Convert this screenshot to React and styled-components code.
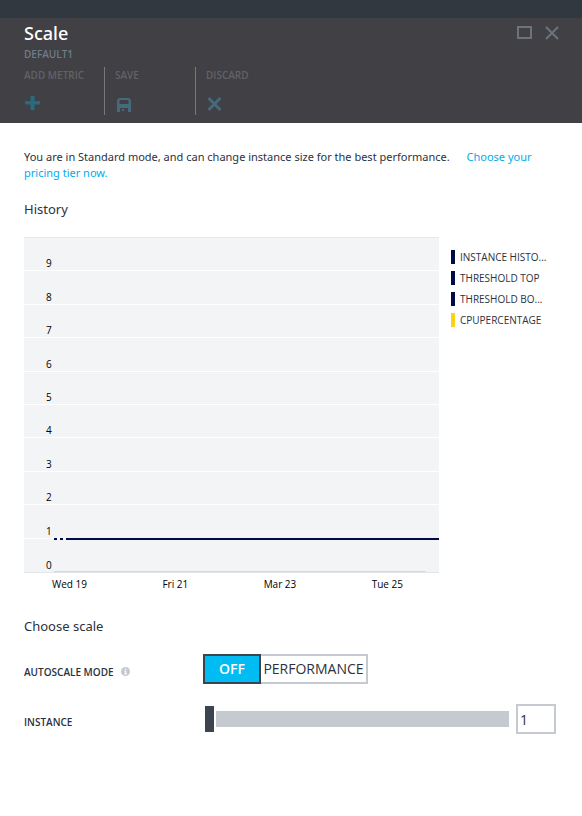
import React, { useState } from "react";
import styled, { createGlobalStyle } from "styled-components";

const GlobalStyle = createGlobalStyle`
  * { box-sizing: border-box; }
  body {
    margin: 0;
    background: #fff;
    color: #2b323d;
    font-family: "Open Sans", "Noto Sans", sans-serif;
    font-size: 12px;
  }
  button, input { font-family: inherit; color: inherit; }
`;

const Blade = styled.main`
  min-height: 100vh;
`;

const TopStrip = styled.div`
  height: 18px;
  background: #31383f;
`;

const Header = styled.header`
  height: 105px;
  padding: 2px 23px 0 24px;
  background: #404045;
`;

const TitleRow = styled.div`
  display: flex;
  justify-content: space-between;
  align-items: center;
`;

const Title = styled.h1`
  margin: 0;
  font-family: "Noto Sans", sans-serif;
  font-size: 18px;
  line-height: 26px;
  font-weight: 500;
  color: #fff;
`;

const WindowButtons = styled.div`
  display: flex;
  gap: 13px;
`;

const IconButton = styled.button`
  display: block;
  padding: 0;
  border: 0;
  background: none;
  line-height: 0;
  color: #6b747e;
`;

const Subtitle = styled.div`
  font-size: 10px;
  line-height: 16px;
  font-weight: 600;
  color: #6f7c89;
`;

const Commands = styled.div`
  display: flex;
  margin-top: 5px;
`;

const Command = styled.button`
  display: flex;
  flex-direction: column;
  align-items: flex-start;
  gap: 11px;
  width: ${(p) => p.$width}px;
  height: 48px;
  padding: 0 0 0 ${(p) => (p.$divided ? 10 : 0)}px;
  border: 0;
  border-left: ${(p) => (p.$divided ? "1px solid #77777c" : "0")};
  background: none;
  font-size: 10px;
  line-height: 17px;
  text-align: left;
  white-space: nowrap;
  font-weight: 600;

  span { color: #626267; }
  svg { color: ${(p) => p.$tint}; }
`;

const Content = styled.div`
  padding: 26px 24px;
`;

const Notice = styled.div`
  font-family: "Noto Sans", sans-serif;
  font-size: 11px;
  line-height: 16px;
`;

const NoticeLink = styled.a`
  margin-left: 14px;
  color: #00abec;
  text-decoration: none;
`;

const SectionTitle = styled.h2`
  margin: ${(p) => p.$top}px 0 0;
  font-family: "Noto Sans", sans-serif;
  font-size: 13px;
  line-height: 20px;
  font-weight: 400;
`;

const History = styled.div`
  display: flex;
  gap: 12px;
  margin-top: 18px;
`;

const Chart = styled.div`
  flex: 1;
  min-width: 0;
`;

const Plot = styled.div`
  position: relative;
  display: grid;
  grid-template-rows: repeat(10, 1fr);
  height: 336px;
  background: #f3f4f6;
  border-top: 1px solid #e6e8ea;
  border-bottom: 1px solid #e3e5e8;
`;

const Band = styled.div`
  display: flex;
  align-items: flex-end;
  padding-left: 22px;
  border-bottom: ${(p) => (p.$last ? "0" : "1px solid #fff")};
  font-size: 10px;
  line-height: 13px;
  color: #000;
`;

const Series = styled.svg`
  position: absolute;
  left: 30px;
  bottom: 0;
  width: calc(100% - 30px);
  height: 40px;
`;

const Dates = styled.div`
  display: flex;
  justify-content: space-between;
  padding: 3px 36px 0 28px;
  height: 24px;
  font-size: 10px;
  line-height: 16px;
  color: #000;
`;

const Legend = styled.ul`
  display: flex;
  flex-direction: column;
  gap: 7px;
  width: 93px;
  margin: 13px 14px 0 0;
  padding: 0;
  list-style: none;
`;

const LegendItem = styled.li`
  padding-left: 5px;
  border-left: 4px solid ${(p) => p.$color};
  font-size: 10px;
  line-height: 14px;
  white-space: nowrap;
`;

const Field = styled.div`
  display: flex;
  align-items: center;
  min-height: 30px;
  margin-top: ${(p) => p.$top}px;
`;

const FieldLabel = styled.label`
  display: flex;
  align-items: center;
  gap: 7px;
  width: 179px;
  padding-top: 5px;
  font-size: 10px;
  line-height: 16px;
  font-weight: 600;
`;

const Segments = styled.div`
  display: flex;
`;

const Segment = styled.button`
  height: 30px;
  width: ${(p) => p.$width}px;
  padding: 0;
  border: 2px solid ${(p) => (p.$active ? "#3c444f" : "#c5cad1")};
  border-left-width: ${(p) => (p.$active ? 2 : 0)}px;
  background: ${(p) => (p.$active ? "#00bcf2" : "#fff")};
  color: ${(p) => (p.$active ? "#fff" : "#2b323d")};
  font-size: 14px;
  line-height: 26px;
  font-weight: ${(p) => (p.$active ? 600 : 400)};
`;

const Slider = styled.input`
  flex: 1;
  min-width: 0;
  height: 26px;
  margin: 0 7px 0 2px;
  appearance: none;
  background: none;

  &::-webkit-slider-runnable-track {
    height: 16px;
    background: #c5cad1;
  }
  &::-webkit-slider-thumb {
    appearance: none;
    width: 9px;
    height: 26px;
    margin-top: -5px;
    background: #3c444f;
    box-shadow: 0 0 0 2px #fff;
  }
`;

const NumberBox = styled.input`
  width: 40px;
  height: 30px;
  margin-right: 2px;
  padding: 2px;
  border: 2px solid #c5cad1;
  border-radius: 0;
  background: #fff;
  font-size: 14px;
`;

const legend = [
  { label: "INSTANCE HISTO...", name: "Instance history", color: "#000b48" },
  { label: "THRESHOLD TOP", name: "Threshold top", color: "#000b48" },
  { label: "THRESHOLD BO...", name: "Threshold bottom", color: "#000b48" },
  { label: "CPUPERCENTAGE", name: "CpuPercentage", color: "#fcd116" },
];
const levels = [9, 8, 7, 6, 5, 4, 3, 2, 1, 0];
const dates = ["Wed 19", "Fri 21", "Mar 23", "Tue 25"];

const PlusIcon = () => (
  <svg width="17" height="17" viewBox="0 0 17 17" fill="currentColor">
    <path d="M6.5 1h4v5H16v3.6h-5.5V15h-4V9.600H1V6h5.500z" />
  </svg>
);
const SaveIcon = () => (
  <svg width="17" height="17" viewBox="0 0 17 17" fill="currentColor" fillRule="evenodd">
    <path d="M4 3h10l2 2v12h-3v-4H5v4H2V5zM4.500 5v4h9V5zM7 14h2v2H7z" />
  </svg>
);
const CrossIcon = () => (
  <svg width="17" height="17" viewBox="0 0 17 17" fill="none" stroke="currentColor" strokeWidth="3">
    <path d="M2.5 3l12 12M14.5 3l-12 12" />
  </svg>
);
const MaximizeIcon = () => (
  <svg width="15" height="14" viewBox="0 0 15 14" fill="none" stroke="currentColor" strokeWidth="2">
    <path d="M1 1h13v11H1z" />
  </svg>
);
const CloseIcon = () => (
  <svg width="14" height="14" viewBox="0 0 14 14" fill="none" stroke="currentColor" strokeWidth="2">
    <path d="M1 1l12 12M13 1L1 13" />
  </svg>
);
const InfoIcon = () => (
  <svg width="9" height="9" viewBox="0 0 9 9">
    <circle cx="4.5" cy="4.5" r="4.5" fill="#c5cad1" />
    <path d="M4 1.5h1.2v1.2H4zM3.5 3.6h1.7v3H6v.8H3.4v-.8H4V4.4h-.5z" fill="#fff" />
  </svg>
);

export default function App() {
  const [mode, setMode] = useState("off");
  const [count, setCount] = useState(1);
  const update = (e) => setCount(Number(e.target.value));

  return (
    <Blade>
      <GlobalStyle />
      <TopStrip />
      <Header>
        <TitleRow>
          <Title>Scale</Title>
          <WindowButtons>
            <IconButton aria-label="Maximize"><MaximizeIcon /></IconButton>
            <IconButton aria-label="Close"><CloseIcon /></IconButton>
          </WindowButtons>
        </TitleRow>
        <Subtitle>DEFAULT1</Subtitle>
        <Commands>
          <Command $width={80} $tint="#286a80"><span>ADD METRIC</span><PlusIcon /></Command>
          <Command $width={91} $divided $tint="#46697c"><span>SAVE</span><SaveIcon /></Command>
          <Command $width={91} $divided $tint="#46697c"><span>DISCARD</span><CrossIcon /></Command>
        </Commands>
      </Header>
      <Content>
        <Notice>
          <span>You are in Standard mode, and can change instance size for the best performance.</span>{" "}
          <NoticeLink href="#pricing">Choose your pricing tier now.</NoticeLink>
        </Notice>
        <SectionTitle $top={18}>History</SectionTitle>
        <History>
          <Chart>
            <Plot>
              {levels.map((n) => <Band key={n} $last={n === 0}>{n}</Band>)}
              <Series aria-hidden="true">
                <path d="M0 7h3M6 7h3" stroke="#000b48" strokeWidth="2" />
                <line x1="12" y1="7" x2="100%" y2="7" stroke="#000b48" strokeWidth="2" />
                <rect x="0" y="39" width="96.5%" height="1" fill="#ecdc86" />
              </Series>
            </Plot>
            <Dates>{dates.map((d) => <span key={d}>{d}</span>)}</Dates>
          </Chart>
          <Legend>
            {legend.map((l) => <LegendItem key={l.name} $color={l.color} title={l.name}>{l.label}</LegendItem>)}
          </Legend>
        </History>
        <SectionTitle $top={19}>Choose scale</SectionTitle>
        <Field $top={18}>
          <FieldLabel as="div" id="mode-label">AUTOSCALE MODE <InfoIcon /></FieldLabel>
          <Segments role="group" aria-labelledby="mode-label">
            <Segment $width={58} $active={mode === "off"} onClick={() => setMode("off")}>OFF</Segment>
            <Segment $width={107} $active={mode === "performance"} onClick={() => setMode("performance")}>PERFORMANCE</Segment>
          </Segments>
        </Field>
        <Field $top={20}>
          <FieldLabel htmlFor="instances">INSTANCE</FieldLabel>
          <Slider id="instances" type="range" min="1" max="10" value={count} onChange={update} />
          <NumberBox aria-label="Instance count" value={count} onChange={update} />
        </Field>
      </Content>
    </Blade>
  );
}
